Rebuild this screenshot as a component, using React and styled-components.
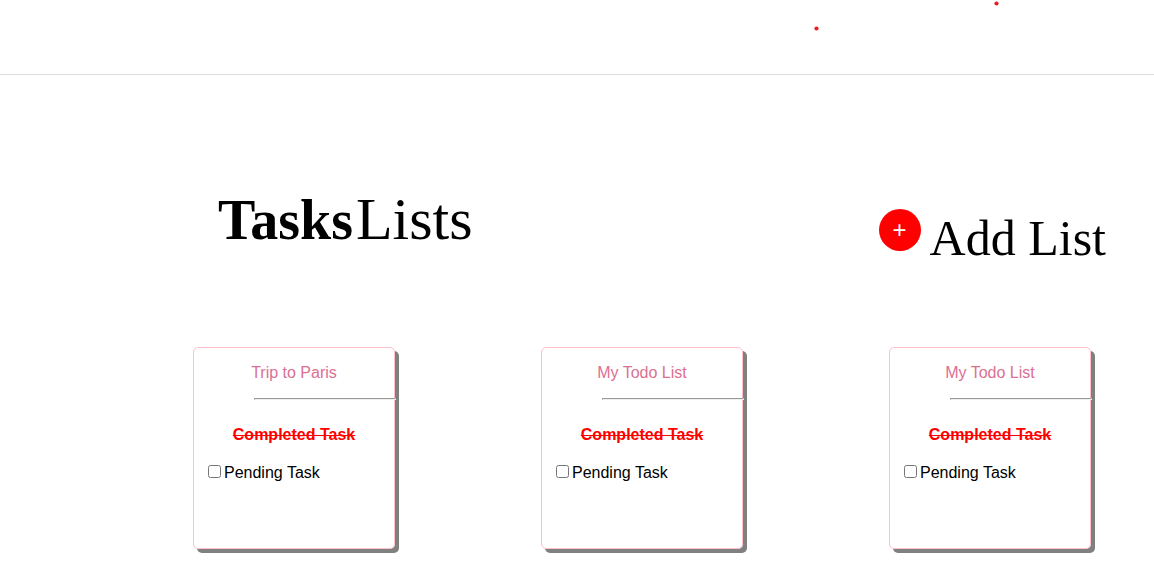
import React from "react";
import styled, { createGlobalStyle } from "styled-components";

const GlobalStyle = createGlobalStyle`
  *, *::before, *::after { box-sizing: border-box; }
  body {
    margin: 0;
    background: #fff;
    color: #000;
    font-family: "Liberation Sans", Arial, sans-serif;
    font-size: 16px;
    line-height: 18px;
  }
`;

const Header = styled.header`
  display: flex;
  justify-content: flex-end;
  padding-right: 154px;
  border-bottom: 1px solid #dcdcdc;
`;

const Dots = styled.svg`
  display: block;
  width: 188px;
  height: 74px;
`;

const Main = styled.main`
  padding: 108px 63px 22px 193px;
`;

const TitleRow = styled.div`
  display: flex;
  justify-content: space-between;
  align-items: flex-start;
  margin: 0 -15px 80px 25px;
`;

const Title = styled.h1`
  display: flex;
  align-items: baseline;
  gap: 3px;
  margin: 0;
  font: 400 60px/72px "Liberation Serif", "Times New Roman", serif;
`;

const Strong = styled.strong`
  font-size: 56px;
  font-weight: 700;
`;

const AddGroup = styled.div`
  display: flex;
  align-items: flex-start;
  gap: 9px;
  padding-top: 26px;
`;

const AddButton = styled.button`
  width: 42px;
  height: 42px;
  padding: 0;
  border: 0;
  border-radius: 50%;
  background: red;
  color: #fff;
  font: 400 24px/42px "Liberation Sans", Arial, sans-serif;
  text-align: center;
  cursor: pointer;
`;

const AddLabel = styled.label`
  font: 400 50px/58px "Liberation Serif", "Times New Roman", serif;
  white-space: nowrap;
  cursor: pointer;
`;

const Cards = styled.div`
  display: flex;
  justify-content: space-between;
`;

const Card = styled.section`
  width: 202px;
  min-height: 202px;
  border: 1px solid pink;
  border-radius: 5px;
  box-shadow: 4px 4px gray;
`;

const CardTitle = styled.h2`
  margin: 16px 0;
  color: palevioletred;
  font-size: 16px;
  font-weight: 400;
  line-height: 18px;
  text-align: center;
`;

const Divider = styled.hr`
  width: 142px;
  margin: 0 0 26px 60px;
  border: 1px solid;
  border-color: #9a9a9a #eee #eee #9a9a9a;
`;

const Completed = styled.p`
  margin: 0 0 20px;
  color: red;
  font-weight: 700;
  text-align: center;
  text-decoration: line-through;
`;

const Pending = styled.label`
  display: flex;
  align-items: flex-start;
  gap: 3px;
  padding-left: 14px;
`;

const Checkbox = styled.input`
  width: 13px;
  height: 13px;
  margin: 1px 0 0;
`;

const lists = [
  { id: 1, name: "Trip to Paris" },
  { id: 2, name: "My Todo List" },
  { id: 3, name: "My Todo List" },
];

export default function App() {
  return (
    <>
      <GlobalStyle />
      <Header>
        <Dots viewBox="0 0 188 74" aria-hidden="true">
          <circle cx="4.5" cy="28.5" r="2.1" fill="#e91c24" />
          <circle cx="184.5" cy="3.5" r="2.1" fill="#e91c24" />
        </Dots>
      </Header>
      <Main>
        <TitleRow>
          <Title>
            <Strong>Tasks</Strong>
            <span>Lists</span>
          </Title>
          <AddGroup>
            <AddButton id="add-list" type="button">+</AddButton>
            <AddLabel htmlFor="add-list">Add List</AddLabel>
          </AddGroup>
        </TitleRow>
        <Cards>
          {lists.map((list) => (
            <Card key={list.id}>
              <CardTitle>{list.name}</CardTitle>
              <Divider />
              <Completed>Completed Task</Completed>
              <Pending>
                <Checkbox type="checkbox" />
                <span>Pending Task</span>
              </Pending>
            </Card>
          ))}
        </Cards>
      </Main>
    </>
  );
}
